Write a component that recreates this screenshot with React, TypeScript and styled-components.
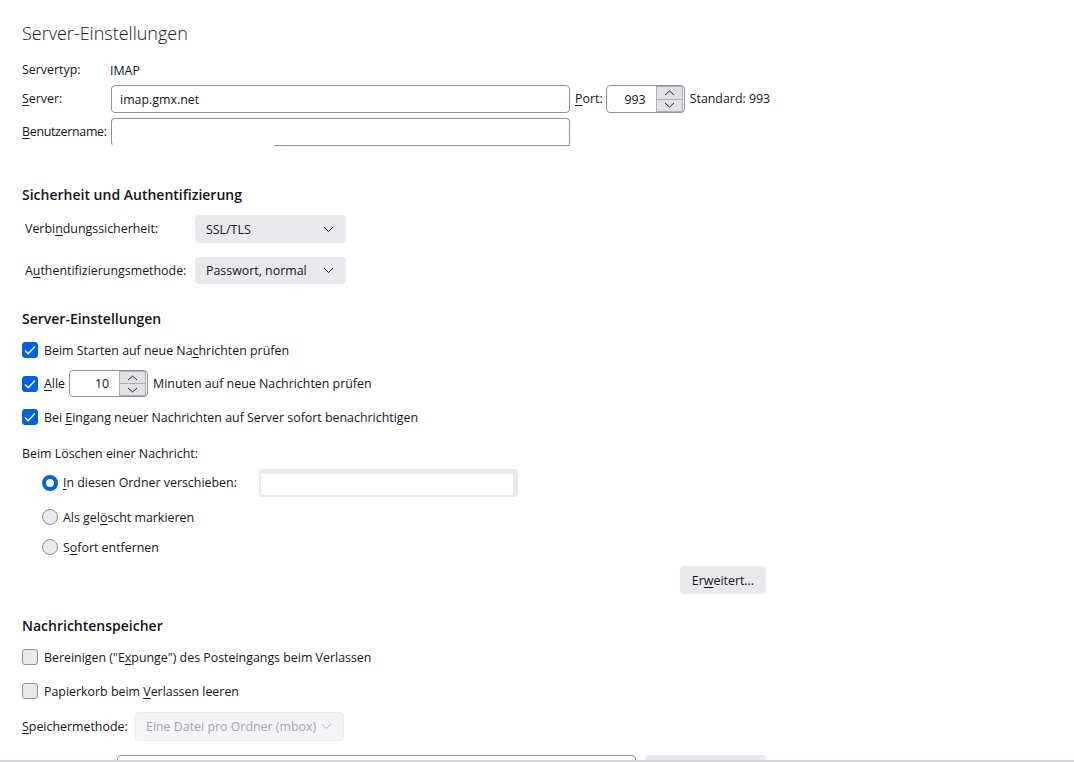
import React from 'react';
import styled, { createGlobalStyle } from 'styled-components';

const GlobalStyle = createGlobalStyle`
  html, body {
    margin: 0;
    padding: 0;
    background: #ffffff;
  }
  body {
    font-family: "Open Sans", "Noto Sans", sans-serif;
    font-size: 12.4px;
    color: #15141a;
  }
`;

const Page = styled.div`
  height: 762px;
  display: flex;
  flex-direction: column;
  overflow: hidden;
`;

const Content = styled.div`
  flex: 1;
  min-height: 0;
  overflow: hidden;
  padding: 20px 0 0 22px;
  display: flex;
  flex-direction: column;
  & > * {
    flex-shrink: 0;
  }
`;

const BottomEdge = styled.div`
  flex: none;
  height: 2px;
  background: #d4d4dc;
`;

const Title = styled.h1`
  margin: 0;
  font-size: 18px;
  font-weight: 300;
  line-height: 26px;
  color: #15141a;
`;

const Heading = styled.h2<{ $top: number }>`
  margin: ${p => p.$top}px 0 0;
  font-size: 14px;
  font-weight: 600;
  line-height: 20px;
  color: #15141a;
`;

const Row = styled.div<{ $top?: number; $indent?: number }>`
  display: flex;
  align-items: center;
  min-height: 20px;
  margin-top: ${p => p.$top ?? 0}px;
  padding-left: ${p => p.$indent ?? 0}px;
  white-space: nowrap;
`;

const Label = styled.span<{ $w?: number; $gap?: number; $lead?: number; $tight?: boolean }>`
  flex: none;
  width: ${p => (p.$w ? `${p.$w}px` : 'auto')};
  margin-left: ${p => p.$lead ?? 0}px;
  margin-right: ${p => p.$gap ?? 0}px;
  letter-spacing: ${p => (p.$tight ? '-0.3px' : 'normal')};
  line-height: 20px;
`;

const Key = styled.span`
  text-decoration: underline;
  text-underline-offset: 2px;
  text-decoration-thickness: 1px;
`;

const TextField = styled.div<{ $w: number; $h?: number; $cut?: number }>`
  position: relative;
  flex: none;
  box-sizing: border-box;
  width: ${p => p.$w}px;
  height: ${p => p.$h ?? 28}px;
  border: 1px solid #8f8f9d;
  border-bottom-color: ${p => (p.$cut ? 'transparent' : '#8f8f9d')};
  border-radius: 4px;
  background: #ffffff;
  display: flex;
  align-items: center;
  padding: 0 8px;
  &::after {
    content: '';
    display: ${p => (p.$cut ? 'block' : 'none')};
    position: absolute;
    left: ${p => p.$cut ?? 0}px;
    right: -1px;
    bottom: -1px;
    height: 1px;
    background: #8f8f9d;
  }
`;

const SpinBox = styled.div<{ $h: number }>`
  flex: none;
  box-sizing: border-box;
  width: 79px;
  height: ${p => p.$h}px;
  border: 1px solid #8f8f9d;
  border-radius: 4px;
  background: #fff;
  display: flex;
  align-items: stretch;
`;

const SpinValue = styled.span`
  flex: 1;
  text-align: right;
  padding-right: 10px;
  align-self: center;
`;

const SpinButtons = styled.div`
  width: 27px;
  display: flex;
  flex-direction: column;
  margin: 0 1px 0 0;
`;

const SpinButton = styled.div`
  flex: 1;
  display: flex;
  align-items: center;
  justify-content: center;
  background: #e1e1e3;
  border: 1px solid #adadb3;
  & + & {
    border-top: none;
  }
`;

const Check = styled.span<{ $on?: boolean }>`
  flex: none;
  box-sizing: border-box;
  width: 16px;
  height: 16px;
  margin-right: 6px;
  border-radius: 3px;
  background: ${p => (p.$on ? '#0061e0' : '#e9e9ed')};
  border: 1px solid ${p => (p.$on ? '#0061e0' : '#8f8f9d')};
  display: inline-flex;
  align-items: center;
  justify-content: center;
`;

const Radio = styled.span<{ $on?: boolean }>`
  flex: none;
  box-sizing: border-box;
  width: 16px;
  height: 16px;
  margin-right: 5px;
  border-radius: 50%;
  background: ${p => (p.$on ? '#ffffff' : '#e9e9ed')};
  border: ${p => (p.$on ? '4px solid #0061e0' : '1px solid #8f8f9d')};
`;

const Select = styled.div<{ $w: number; $h?: number; $disabled?: boolean }>`
  flex: none;
  box-sizing: border-box;
  width: ${p => p.$w}px;
  height: ${p => p.$h ?? 28}px;
  padding: 0 11px 0 10px;
  border-radius: 4px;
  background: ${p => (p.$disabled ? '#f5f5f7' : '#e9e9ed')};
  border: 1px solid ${p => (p.$disabled ? '#ececef' : '#e9e9ed')};
  color: ${p => (p.$disabled ? '#a4a4aa' : '#15141a')};
  display: flex;
  align-items: center;
  justify-content: space-between;
`;

const FolderPicker = styled.div`
  flex: none;
  box-sizing: border-box;
  width: 259px;
  height: 28px;
  padding: 5px 5px 2px 2px;
  border-radius: 4px;
  background: #e9e9ed;
  display: flex;
`;

const FolderInner = styled.div`
  flex: 1;
  background: #ffffff;
`;

const Button = styled.div<{ $w: number; $lead?: number }>`
  flex: none;
  box-sizing: border-box;
  width: ${p => p.$w}px;
  height: 28px;
  margin-left: ${p => p.$lead ?? 0}px;
  border-radius: 4px;
  background: #e9e9ed;
  display: flex;
  align-items: center;
  justify-content: center;
`;

const ButtonRow = styled.div<{ $top: number }>`
  display: flex;
  justify-content: flex-end;
  width: 744px;
  margin-top: ${p => p.$top}px;
`;

const Chevron = ({ color = '#15141a' }: { color?: string }) => (
  <svg width="11" height="7" viewBox="0 0 11 7">
    <path d="M1 1 L5.5 5.5 L10 1" fill="none" stroke={color} strokeWidth="1" />
  </svg>
);

const Arrow = ({ up }: { up?: boolean }) => (
  <svg width="11" height="6" viewBox="0 0 11 6">
    <path d={up ? 'M1 5 L5.5 1 L10 5' : 'M1 1 L5.5 5 L10 1'} fill="none" stroke="#2b2a33" strokeWidth="1" />
  </svg>
);

const Tick = () => (
  <svg width="14" height="14" viewBox="0 0 14 14">
    <path d="M2 7.5 L5.2 10.7 L12 3.5" fill="none" stroke="#ffffff" strokeWidth="1.3" />
  </svg>
);

const Spinner = ({ value, h }: { value: string; h: number }) => (
  <SpinBox $h={h}>
    <SpinValue>{value}</SpinValue>
    <SpinButtons>
      <SpinButton>
        <Arrow up />
      </SpinButton>
      <SpinButton>
        <Arrow />
      </SpinButton>
    </SpinButtons>
  </SpinBox>
);

export default function App() {
  return (
    <Page>
      <GlobalStyle />
      <Content>
        <Title>Server-Einstellungen</Title>

        <Row $top={14}>
          <Label $w={88}>Servertyp:</Label>
          <span>IMAP</span>
        </Row>
        <Row $top={5}>
          <Label $w={89}>
            <Key>S</Key>erver:
          </Label>
          <TextField $w={459}>imap.gmx.net</TextField>
          <Label $lead={5} $gap={3}>
            <Key>P</Key>ort:
          </Label>
          <Spinner value="993" h={28} />
          <Label $lead={5}>Standard: 993</Label>
        </Row>
        <Row $top={5}>
          <Label $w={89} $tight>
            <Key>B</Key>enutzername:
          </Label>
          <TextField $w={459} $cut={162} />
        </Row>

        <Heading $top={39}>Sicherheit und Authentifizierung</Heading>
        <Row $top={10} $indent={3}>
          <Label $w={170}>
            Verbi<Key>n</Key>dungssicherheit:
          </Label>
          <Select $w={151}>
            <span>SSL/TLS</span>
            <Chevron />
          </Select>
        </Row>
        <Row $top={14} $indent={3}>
          <Label $w={170}>
            A<Key>u</Key>thentifizierungsmethode:
          </Label>
          <Select $w={151} $h={27}>
            <span>Passwort, normal</span>
            <Chevron />
          </Select>
        </Row>

        <Heading $top={25}>Server-Einstellungen</Heading>
        <Row $top={11}>
          <Check $on>
            <Tick />
          </Check>
          <span>
            Beim Starten auf neue Na<Key>c</Key>hrichten prüfen
          </span>
        </Row>
        <Row $top={10}>
          <Check $on>
            <Tick />
          </Check>
          <Label $gap={4}>
            <Key>A</Key>lle
          </Label>
          <Spinner value="10" h={27} />
          <Label $lead={5}>Minuten auf neue Nachrichten prüfen</Label>
        </Row>
        <Row $top={10}>
          <Check $on>
            <Tick />
          </Check>
          <span>
            Bei <Key>E</Key>ingang neuer Nachrichten auf Server sofort benachrichtigen
          </span>
        </Row>

        <Row $top={16}>
          <span>Beim Löschen einer Nachricht:</span>
        </Row>
        <Row $top={6} $indent={20}>
          <Radio $on />
          <Label $w={196}>
            <Key>I</Key>n diesen Ordner verschieben:
          </Label>
          <FolderPicker>
            <FolderInner />
          </FolderPicker>
        </Row>
        <Row $top={10} $indent={20}>
          <Radio />
          <span>
            Als gel<Key>ö</Key>scht markieren
          </span>
        </Row>
        <Row $top={10} $indent={20}>
          <Radio />
          <span>
            S<Key>o</Key>fort entfernen
          </span>
        </Row>

        <ButtonRow $top={9}>
          <Button $w={86}>
            <span>
              Er<Key>w</Key>eitert...
            </span>
          </Button>
        </ButtonRow>

        <Heading $top={22}>Nachrichtenspeicher</Heading>
        <Row $top={11}>
          <Check />
          <span>
            Bereinigen ("E<Key>x</Key>punge") des Posteingangs beim Verlassen
          </span>
        </Row>
        <Row $top={14}>
          <Check />
          <span>
            Papierkorb beim <Key>V</Key>erlassen leeren
          </span>
        </Row>
        <Row $top={11}>
          <Label $w={113}>
            <Key>S</Key>peichermethode:
          </Label>
          <Select $w={209} $h={29} $disabled>
            <span>Eine Datei pro Ordner (mbox)</span>
            <Chevron color="#b4b4ba" />
          </Select>
        </Row>
        <Row $top={14} $indent={95}>
          <TextField $w={519} />
          <Button $w={121} $lead={9} />
        </Row>
      </Content>
      <BottomEdge />
    </Page>
  );
}
